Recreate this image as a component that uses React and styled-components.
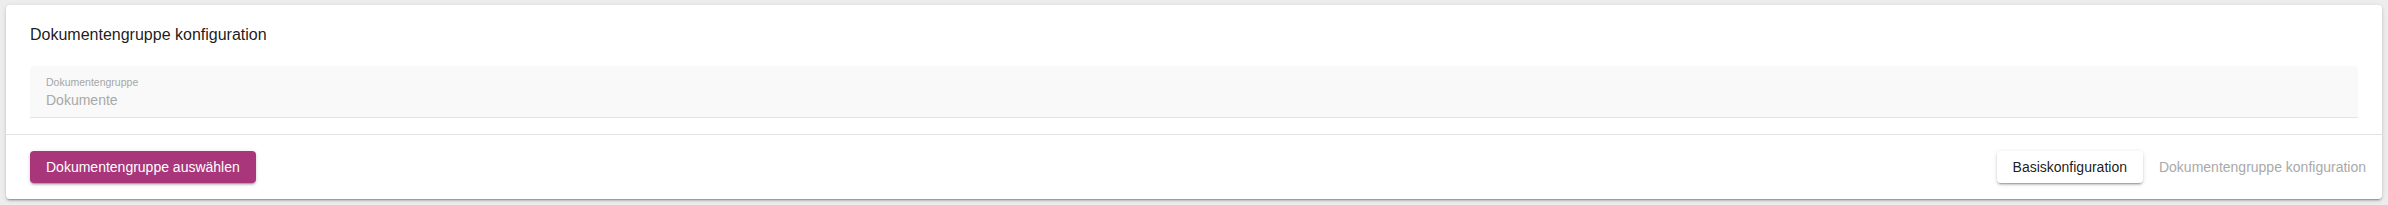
import React from "react";
import styled, { createGlobalStyle } from "styled-components";

const Global = createGlobalStyle`
  html, body {
    margin: 0;
    padding: 0;
    background: #ededed;
    font-family: "Liberation Sans", Arial, sans-serif;
  }
  body {
    padding: 5px 6px 6px 6px;
  }
  * { box-sizing: border-box; }
`;

const Card = styled.section`
  background: #ffffff;
  border-radius: 4px;
  box-shadow: 0px 3px 1px -2px rgba(0,0,0,0.2), 0px 2px 2px 0px rgba(0,0,0,0.14), 0px 1px 5px 0px rgba(0,0,0,0.12);
  display: flex;
  flex-direction: column;
`;

const Content = styled.div`
  padding: 18px 24px 16px 24px;
  display: flex;
  flex-direction: column;
  gap: 19px;
  border-bottom: 1px solid #e2e2e2;
`;

const Title = styled.h2`
  margin: 0;
  font-size: 16px;
  line-height: 24px;
  font-weight: 400;
  color: rgba(0,0,0,0.9);
`;

const Field = styled.div`
  background: #f9f9f9;
  border-bottom: 1px solid #e4e4e4;
  border-radius: 4px 4px 0 0;
  padding: 10px 16px 8px 16px;
  display: flex;
  flex-direction: column;
  gap: 3px;
`;

const FieldLabel = styled.label`
  font-size: 10.5px;
  line-height: 12px;
  color: #a6a6a6;
`;

const FieldValue = styled.div`
  font-size: 14px;
  line-height: 18px;
  color: #a8a8a8;
`;

const Actions = styled.div`
  display: flex;
  align-items: center;
  justify-content: space-between;
  padding: 16px 0 16px 24px;
`;

const Group = styled.div`
  display: flex;
  align-items: center;
`;

const Button = styled.button`
  font-family: inherit;
  font-size: 14px;
  line-height: 18px;
  height: 32px;
  padding: 0 16px;
  border: none;
  border-radius: 4px;
  cursor: pointer;
  white-space: nowrap;
  background: ${p => p.$variant === "primary" ? "#a9367a" : p.$variant === "raised" ? "#ffffff" : "transparent"};
  color: ${p => p.$variant === "primary" ? "#ffffff" : p.$variant === "raised" ? "rgba(0,0,0,0.9)" : "#a9a9a9"};
  box-shadow: ${p => p.$variant === "text" ? "none" : "0px 3px 1px -2px rgba(0,0,0,0.2), 0px 2px 2px 0px rgba(0,0,0,0.14), 0px 1px 5px 0px rgba(0,0,0,0.12)"};
`;

export default function App() {
  return (
    <>
      <Global />
      <Card>
        <Content>
          <Title>Dokumentengruppe konfiguration</Title>
          <Field>
            <FieldLabel>Dokumentengruppe</FieldLabel>
            <FieldValue>Dokumente</FieldValue>
          </Field>
        </Content>
        <Actions>
          <Button $variant="primary">Dokumentengruppe auswählen</Button>
          <Group>
            <Button $variant="raised">Basiskonfiguration</Button>
            <Button $variant="text" disabled>Dokumentengruppe konfiguration</Button>
          </Group>
        </Actions>
      </Card>
    </>
  );
}
